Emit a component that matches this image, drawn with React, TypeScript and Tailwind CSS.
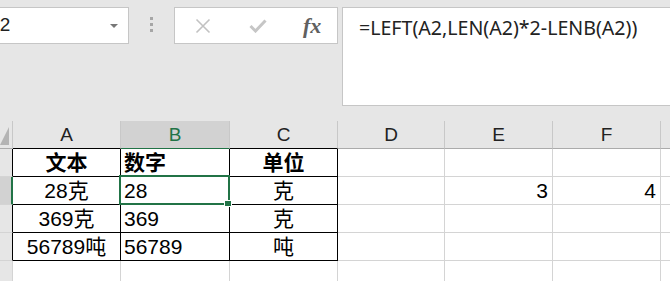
const cols = [
  { key: "A", w: 108, align: "center" },
  { key: "B", w: 109, align: "left" },
  { key: "C", w: 108, align: "center" },
  { key: "D", w: 107, align: "center" },
  { key: "E", w: 108, align: "right" },
  { key: "F", w: 108, align: "right" },
  { key: "", w: 30, align: "left" },
];

const rows = [
  ["文本", "数字", "单位", "", "", "", ""],
  ["28克", "28", "克", "", "3", "4", ""],
  ["369克", "369", "克", "", "", "", ""],
  ["56789吨", "56789", "吨", "", "", "", ""],
  ["", "", "", "", "", "", ""],
];

const cellFont = { fontFamily: '"Liberation Sans", "Noto Sans CJK SC", sans-serif' };

function Toolbar() {
  return (
    <div className="flex items-start pt-[7px] h-[121px] shrink-0">
      {/* name box */}
      <div className="ml-[-40px] w-[169px] h-[37px] bg-white border border-[#c6c6c6] flex items-center justify-between pr-[10px]">
        <span className="text-[19px] text-[#222] pl-[26px]" style={cellFont}>
          B2
        </span>
        <span className="w-0 h-0 border-l-[4px] border-r-[4px] border-t-[4px] border-l-transparent border-r-transparent border-t-[#777]" />
      </div>
      {/* separator dots */}
      <div className="w-[45px] flex flex-col items-center gap-[3px] pt-[10px]">
        <span className="w-[3px] h-[3px] bg-[#a6a6a6]" />
        <span className="w-[3px] h-[3px] bg-[#a6a6a6]" />
        <span className="w-[3px] h-[3px] bg-[#a6a6a6]" />
      </div>
      {/* fx box */}
      <div className="w-[164px] h-[37px] bg-white border border-[#c6c6c6] flex items-center">
        <svg className="ml-[20px]" width="16" height="16" viewBox="0 0 16 16">
          <path d="M1.5 1.5 L14.5 14.5 M14.5 1.5 L1.5 14.5" stroke="#c2c2c2" strokeWidth="1.6" />
        </svg>
        <svg className="ml-[38px]" width="18" height="14" viewBox="0 0 18 14">
          <path d="M1.5 7 L6.5 12 L16.5 1.5" stroke="#c6c6c6" strokeWidth="3" fill="none" />
        </svg>
        <span
          className="ml-[36px] text-[22px] italic font-bold text-[#606060] leading-none"
          style={{ fontFamily: '"Liberation Serif", "DejaVu Serif", serif' }}
        >
          fx
        </span>
      </div>
      {/* formula bar */}
      <div className="ml-[4px] flex-1 mr-[-20px] h-[99px] bg-white border border-[#c6c6c6] pl-[16px] pt-[5px]">
        <span className="text-[19.6px] text-[#222]" style={{ fontFamily: '"Noto Sans", sans-serif' }}>
          =LEFT(A2,LEN(A2)*2-LENB(A2))
        </span>
      </div>
    </div>
  );
}

function Grid() {
  return (
    <div className="relative" style={cellFont}>
      {/* column headers */}
      <div className="flex h-[28px]">
        <div className="w-[13px] h-full shrink-0 border-r border-b border-r-[#c8c8c8] border-b-[#ababab] pt-[6px]">
          <svg width="9" height="18" viewBox="0 0 9 18" className="block">
            <path d="M9 0 L9 18 L0 18 Z" fill="#b4b4b4" />
          </svg>
        </div>
        {cols.map((c) => {
          const sel = c.key === "B";
          const bottom =
            c.key === "A" || c.key === "C"
              ? "border-b-black"
              : sel
              ? "border-b-[#217346]"
              : "border-b-[#ababab]";
          return (
            <div
              key={c.w + c.key}
              className={`h-full shrink-0 border-r border-b flex items-center justify-center pt-[2px] text-[19px] border-r-[#c8c8c8] ${bottom} ${
                sel ? "bg-[#d2d2d2] text-[#217346]" : "text-[#222]"
              }`}
              style={{ width: c.w }}
            >
              {c.key}
            </div>
          );
        })}
      </div>
      {rows.map((r, ri) => {
        const selRow = ri === 1;
        const inTable = ri < 4;
        return (
          <div key={ri} className="flex h-[28px]">
            <div
              className={`w-[13px] h-full shrink-0 border-b border-b-[#d4d4d4] ${
                selRow ? "bg-[#d2d2d2] border-r-2 border-r-[#217346]" : "border-r " + (inTable ? "border-r-black" : "border-r-[#d4d4d4]")
              }`}
            />
            {cols.map((c, ci) => {
              const black = inTable && ci < 3;
              const v = r[ci];
              const bold = ri === 0;
              return (
                <div
                  key={ci}
                  className={`h-full shrink-0 bg-white border-r border-b flex items-center text-[21px] leading-none text-black ${
                    black ? "border-r-black border-b-black" : "border-r-[#d4d4d4] border-b-[#d4d4d4]"
                  } ${
                    c.align === "center" ? "justify-center" : c.align === "right" ? "justify-end pr-[4px]" : "justify-start pl-[3px]"
                  } ${bold ? "font-bold" : ""}`}
                  style={{ width: c.w }}
                >
                  {v}
                </div>
              );
            })}
          </div>
        );
      })}
      {/* selection */}
      <div className="absolute left-[119px] top-[54px] w-[111px] h-[30px] border-2 border-[#217346] pointer-events-none" />
      <div className="absolute left-[224px] top-[79px] w-[8px] h-[7px] bg-[#217346] border border-white" />
    </div>
  );
}

export default function App() {
  return (
    <div className="w-[670px] h-[281px] bg-[#e6e6e6] overflow-hidden flex flex-col">
      <Toolbar />
      <Grid />
    </div>
  );
}
